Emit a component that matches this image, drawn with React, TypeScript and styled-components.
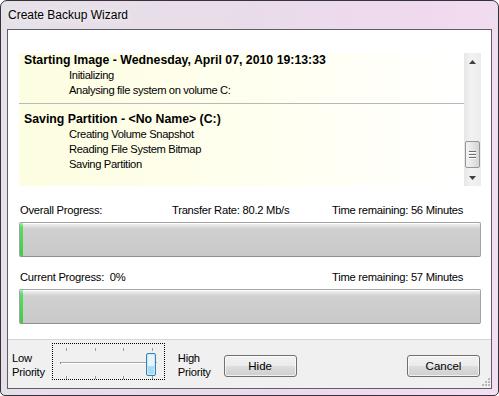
import styled, { createGlobalStyle } from "styled-components";

const GlobalStyle = createGlobalStyle`
  html, body {
    margin: 0;
    padding: 0;
    background: #ffffff;
  }
  body {
    font-family: "Liberation Sans", Arial, sans-serif;
    font-size: 12px;
    color: #000;
  }
`;

const Window = styled.div`
  box-sizing: border-box;
  width: 499px;
  height: 396px;
  border: 1px solid #34323a;
  border-radius: 7px 7px 5px 5px;
  background: linear-gradient(100deg, #e6e1e8 0%, #e9dcea 45%, #efd9ee 75%, #f3dff1 100%);
  display: flex;
  flex-direction: column;
  overflow: hidden;
`;

const TitleBar = styled.div`
  height: 28px;
  flex: none;
  display: flex;
  align-items: center;
  padding-left: 7px;
  font-size: 12px;
  color: #000;
  text-shadow: 0 0 6px rgba(255, 255, 255, 0.9);
`;

const Client = styled.div`
  flex: 1;
  margin: 0 6px 6px 6px;
  border: 1px solid #605d6a;
  background: #f0f0f0;
  display: flex;
  flex-direction: column;
  min-height: 0;
`;

const Panel = styled.div`
  background: #ffffff;
  padding: 23px 10px 15px 11px;
  border-bottom: 1px solid #d5d5d5;
`;

const LogBox = styled.div`
  display: flex;
  height: 133px;
`;

const LogText = styled.div`
  flex: 1;
  background: linear-gradient(90deg, #fdfde1 0%, #fffff0 55%, #ffffff 100%);
  font-family: "Liberation Sans", Tahoma, sans-serif;
`;

const LogSection = styled.div<{ $first?: boolean }>`
  padding: ${(p) => (p.$first ? "0 0 5px" : "8px 0 0")};
  border-bottom: ${(p) => (p.$first ? "1px solid #b9b9b9" : "none")};
`;

const LogHeading = styled.div`
  font-weight: bold;
  font-size: 12.3px;
  line-height: 15px;
  padding-left: 5px;
`;

const LogItem = styled.div`
  font-size: 11.2px;
  letter-spacing: -0.35px;
  line-height: 15px;
  padding-left: 50px;
`;

const ScrollBar = styled.div`
  width: 17px;
  flex: none;
  background: linear-gradient(90deg, #e6e6e6, #f2f2f2 40%, #ececec);
  display: flex;
  flex-direction: column;
  align-items: center;
`;

const ScrollArrow = styled.div`
  height: 17px;
  width: 17px;
  display: flex;
  align-items: center;
  justify-content: center;
`;

const ScrollTrack = styled.div`
  flex: 1;
  width: 100%;
  display: flex;
  flex-direction: column;
  justify-content: flex-end;
  align-items: center;
  padding-bottom: 1px;
`;

const ScrollThumb = styled.div`
  box-sizing: border-box;
  width: 15px;
  height: 27px;
  border: 1px solid #959595;
  border-radius: 2px;
  background: linear-gradient(90deg, #f3f3f3, #e6e6e6 50%, #d4d4d4);
  display: flex;
  flex-direction: column;
  align-items: center;
  justify-content: center;
  gap: 2px;
`;

const Grip = styled.div`
  width: 7px;
  height: 1px;
  background: #6e6e6e;
  box-shadow: 0 1px 0 #ffffff;
`;

const InfoRow = styled.div<{ $top: number }>`
  display: grid;
  grid-template-columns: 152px 160px auto;
  margin-top: ${(p) => p.$top}px;
  padding-left: 1px;
  font-size: 11.2px;
  letter-spacing: -0.25px;
  line-height: 15px;
`;

const Bar = styled.div`
  box-sizing: border-box;
  margin-top: 4px;
  height: 35px;
  border: 1px solid #a3a3a3;
  border-bottom-color: #8f8f8f;
  border-radius: 2px;
  background: linear-gradient(180deg, #f4f4f4 0px, #e2e2e2 3px, #d0d0d0 6px, #c9c9c9 100%);
  box-shadow: inset 0 1px 0 #ffffff;
  overflow: hidden;
`;

const BarFill = styled.div`
  height: 100%;
  background: linear-gradient(180deg, #a8f0ae 0px, #5bdc66 4px, #3ecb4a 100%);
`;

const Footer = styled.div`
  height: 47px;
  flex: none;
  display: flex;
  align-items: center;
  padding: 0 11px 0 4px;
  font-size: 11.2px;
  letter-spacing: -0.25px;
`;

const PriorityLabel = styled.div`
  line-height: 14px;
  margin-top: 3px;
`;

const SliderBox = styled.div`
  box-sizing: border-box;
  width: 113px;
  height: 37px;
  margin: -4px 13px 0 7px;
  border: 1px dotted #000;
`;

const Button = styled.button<{ $gap?: number }>`
  box-sizing: border-box;
  width: 73px;
  height: 22px;
  margin-top: 5px;
  margin-left: ${(p) => p.$gap ?? 0}px;
  border: 1px solid #707070;
  border-radius: 3px;
  background: linear-gradient(180deg, #f2f2f2 0%, #ebebeb 48%, #dddddd 52%, #cfcfcf 100%);
  box-shadow: inset 0 0 0 1px rgba(255, 255, 255, 0.7);
  font-family: "Liberation Sans", Arial, sans-serif;
  font-size: 11.5px;
  color: #000;
  padding: 0;
`;

const Spacer = styled.div`
  flex: 1;
`;

const ResizeGrip = styled.div`
  position: relative;
  align-self: flex-end;
  width: 0;
  height: 100%;
`;

const GripDots = styled.svg`
  position: absolute;
  right: -10px;
  bottom: 1px;
`;

function Arrow({ up }: { up: boolean }) {
  return (
    <svg width="7" height="4" viewBox="0 0 7 4">
      <path d={up ? "M3.5 0 L7 4 L0 4 Z" : "M0 0 L7 0 L3.5 4 Z"} fill="#404040" />
    </svg>
  );
}

function Slider() {
  const ticks = [14, 43, 71, 100];
  return (
    <SliderBox>
      <svg width="111" height="35" viewBox="0 0 111 35">
        {ticks.map((x) => (
          <g key={x}>
            <rect x={x - 1} y={4} width={1} height={3} fill="#9c9c9c" />
            <rect x={x - 1} y={32} width={1} height={3} fill="#9c9c9c" />
          </g>
        ))}
        <rect x={7} y={18} width={97} height={1} fill="#a8a8a8" />
        <rect x={7} y={19} width={97} height={1} fill="#ffffff" />
        <rect x={7} y={18} width={1} height={2} fill="#8a8a8a" />
        <rect x={93.5} y={9.5} width={9} height={22} rx={1.5} fill="#c9e9f8" stroke="#3c7fb1" />
        <rect x={95} y={11} width={6} height={19} fill="#e6f5fc" />
        <rect x={95} y={22} width={6} height={8} fill="#a8dcf5" />
      </svg>
    </SliderBox>
  );
}

export default function App() {
  return (
    <>
      <GlobalStyle />
      <Window>
        <TitleBar>Create Backup Wizard</TitleBar>
        <Client>
          <Panel>
            <LogBox>
              <LogText>
                <LogSection $first>
                  <LogHeading>Starting Image - Wednesday, April 07, 2010 19:13:33</LogHeading>
                  <LogItem>Initializing</LogItem>
                  <LogItem>Analysing file system on volume C:</LogItem>
                </LogSection>
                <LogSection>
                  <LogHeading>Saving Partition - &lt;No Name&gt; (C:)</LogHeading>
                  <LogItem>Creating Volume Snapshot</LogItem>
                  <LogItem>Reading File System Bitmap</LogItem>
                  <LogItem>Saving Partition</LogItem>
                </LogSection>
              </LogText>
              <ScrollBar>
                <ScrollArrow>
                  <Arrow up />
                </ScrollArrow>
                <ScrollTrack>
                  <ScrollThumb>
                    <Grip />
                    <Grip />
                    <Grip />
                  </ScrollThumb>
                </ScrollTrack>
                <ScrollArrow>
                  <Arrow up={false} />
                </ScrollArrow>
              </ScrollBar>
            </LogBox>

            <InfoRow $top={17}>
              <span>Overall Progress:</span>
              <span>Transfer Rate: 80.2 Mb/s</span>
              <span>Time remaining: 56 Minutes</span>
            </InfoRow>
            <Bar>
              <BarFill style={{ width: "3px" }} />
            </Bar>

            <InfoRow $top={13}>
              <span>Current Progress:&nbsp; 0%</span>
              <span />
              <span>Time remaining: 57 Minutes</span>
            </InfoRow>
            <Bar>
              <BarFill style={{ width: "3px" }} />
            </Bar>
          </Panel>

          <Footer>
            <PriorityLabel>
              Low
              <br />
              Priority
            </PriorityLabel>
            <Slider />
            <PriorityLabel>
              High
              <br />
              Priority
            </PriorityLabel>
            <Button $gap={13}>Hide</Button>
            <Spacer />
            <Button>Cancel</Button>
            <ResizeGrip>
              <GripDots width="8" height="8" viewBox="0 0 8 8">
                {[
                  [6, 0],
                  [6, 3],
                  [3, 3],
                  [6, 6],
                  [3, 6],
                  [0, 6],
                ].map(([x, y]) => (
                  <rect key={`${x}-${y}`} x={x} y={y} width={2} height={2} fill="#b8b8b8" />
                ))}
              </GripDots>
            </ResizeGrip>
          </Footer>
        </Client>
      </Window>
    </>
  );
}
